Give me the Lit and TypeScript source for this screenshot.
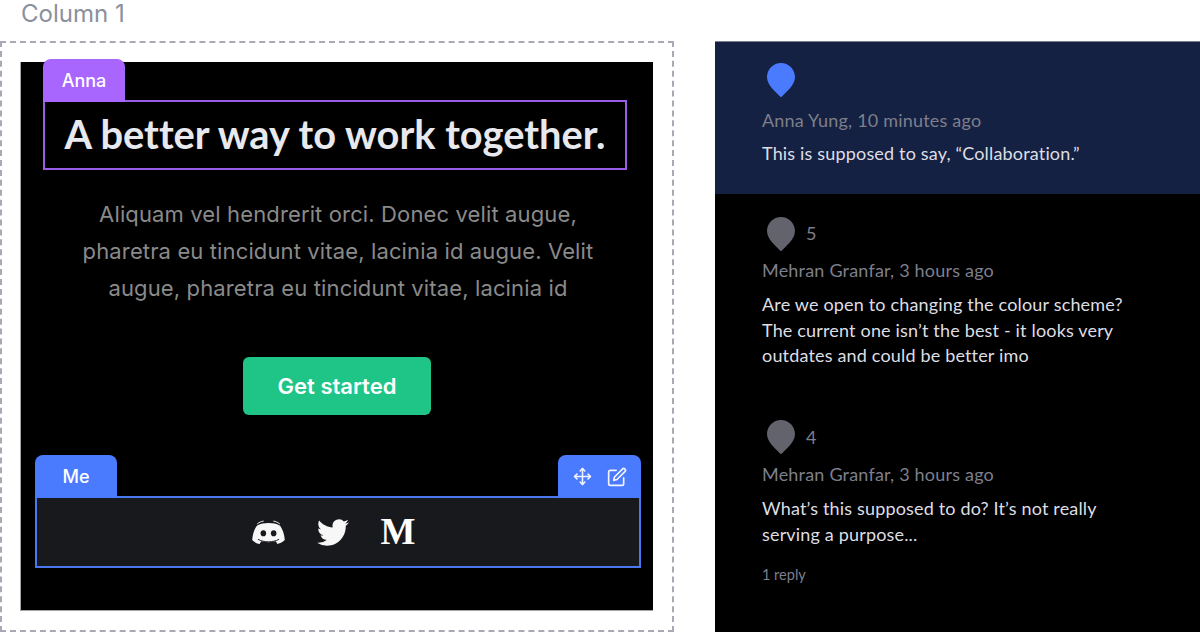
import { LitElement, html, css, svg } from "lit";
import { customElement } from "lit/decorators.js";

const pin = (color: string) => html`<svg class="pin" width="28" height="34" viewBox="0 0 28 34"><path fill=${color} d="M14 0C6.3 0 0 6.3 0 14c0 8 8.500 14.600 13 19.500a1.400 1.400 0 0 0 2 0C19.500 28.600 28 22 28 14 28 6.300 21.700 0 14 0z"/></svg>`;

const discord = svg`
  <path fill="#f7f7f7" d="M10 4.200C7.800 4.700 6 5.500 4.700 6.500 2.300 10 .6 14.500.2 20.300c1.700 1.900 4.300 3.300 7.200 3.800l1.500-2.500c3.600 1 10.600 1 14.200 0l1.500 2.500c2.900-.5 5.500-1.900 7.200-3.800-.4-5.800-2.100-10.300-4.500-13.800C26 5.500 24.200 4.700 22 4.200c-3.900-.7-8.100-.7-12 0z"/>
  <path fill="none" stroke="#f7f7f7" stroke-width="0.900" d="M5 4.800C7 3 9 2.300 11.300 1.900M27 4.800C25 3 23 2.300 20.700 1.900"/>
  <path fill="none" stroke="#18191d" stroke-width="0.900" d="M5.700 19.600c6 3.200 14.600 3.200 20.600 0"/>
  <ellipse cx="11" cy="13.700" rx="2.700" ry="3" fill="#18191d"/><ellipse cx="21" cy="13.700" rx="2.700" ry="3" fill="#18191d"/>`;

const twitter = svg`<path fill="#f7f7f7" d="M23.953 4.570a10 10 0 0 1-2.825.775 4.958 4.958 0 0 0 2.163-2.723c-.951.555-2.005.959-3.127 1.184a4.920 4.920 0 0 0-8.384 4.482C7.690 8.095 4.067 6.130 1.640 3.162a4.822 4.822 0 0 0-.666 2.475c0 1.710.870 3.213 2.188 4.096a4.904 4.904 0 0 1-2.228-.616v.060a4.923 4.923 0 0 0 3.946 4.827 4.996 4.996 0 0 1-2.212.085 4.936 4.936 0 0 0 4.604 3.417 9.867 9.867 0 0 1-6.102 2.105c-.390 0-.779-.023-1.170-.067a13.995 13.995 0 0 0 7.557 2.209c9.053 0 13.998-7.496 13.998-13.985 0-.210 0-.420-.015-.630A9.935 9.935 0 0 0 24 4.590z"/>`;

@customElement("app-root")
export class AppRoot extends LitElement {
  static styles = css`
    :host { display: flex; width: 1200px; height: 632px; background: #fff; overflow: hidden; font-family: Inter, sans-serif; }
    .left { width: 674px; flex: none; display: flex; flex-direction: column; }
    .label { height: 41px; padding-left: 21px; box-sizing: border-box; font-size: 24px; line-height: 27px; color: #8b909d; }
    .frame { height: 591px; box-sizing: border-box; border: 2px dashed #a8a9b4; padding: 19px 19px 20px 18px; }
    .canvas { height: 549px; box-sizing: border-box; background: #000; border-left: 1px solid #a5a5a5; border-bottom: 1px solid #a5a5a5; padding-top: 38px; display: flex; flex-direction: column; }
    .head { position: relative; box-sizing: border-box; width: 584px; height: 70px; margin-left: 22px; padding-bottom: 3px; border: 2px solid #9a5de6; display: flex; align-items: center; justify-content: center; }
    .head h1 { margin: 0; font-family: Lato, sans-serif; font-weight: 700; font-size: 39.800px; font-variant-ligatures: none; color: #e8e8ef; white-space: nowrap; }
    .tab { position: absolute; left: -2px; top: -43px; width: 82px; height: 43px; border-radius: 8px 8px 0 0; color: #fff; font-size: 18px; font-weight: 500; display: flex; align-items: center; justify-content: center; }
    .tab.anna { background: #a866ff; }
    .tab.me { background: #4a7bff; }
    .tab.tools { background: #4a7bff; left: auto; right: -2px; width: 83px; gap: 15px; }
    .tab.tools svg { display: block; }
    p.lead { margin: 26px 0 0 37px; width: 560px; text-align: center; font-size: 22px; letter-spacing: .13px; line-height: 37px; color: #8a8a8a; }
    .cta { margin: 50px 0 0 222px; width: 188px; height: 58px; border-radius: 6px; background: #1fc587; color: #fff; font: 600 22px Inter, sans-serif; display: flex; align-items: center; justify-content: center; }
    .foot { position: relative; margin: 81px 0 0 14px; box-sizing: border-box; width: 606px; height: 72px; padding-right: 10px; background: #18191d; border: 2px solid #4a78f0; display: flex; align-items: center; justify-content: center; gap: 32px; }
    .foot svg.logo { display: block; }
    .foot .m { font-family: "Liberation Serif", serif; font-weight: 700; font-size: 37px; line-height: 32px; color: #fff; width: 34px; text-align: center; }
    .right { margin-left: 41px; margin-top: 41px; flex: 1; background: #000; border-top: 1px solid #7d8290; color: #dedee4; font-family: Lato, sans-serif; }
    .c { padding: 0 47px; }
    .c.active { background: #152142; height: 152px; padding-top: 21px; box-sizing: border-box; }
    .c.two { padding-top: 23px; height: 204px; box-sizing: border-box; }
    .c.three { padding-top: 22px; }
    .top { display: flex; align-items: center; gap: 11px; height: 34px; color: #7d7f8c; font-size: 18px; }
    .two .n { margin-top: -3px; }
    .three .n { margin-top: -1px; }
    .pin { display: block; margin-left: 5px; }
    .meta { font-size: 18px; letter-spacing: .2px; line-height: 24px; color: #7d7f8c; margin-top: 7px; }
    .active .meta { margin-top: 11px; }
    .three .meta { margin-top: 8px; }
    .body { font-size: 18px; letter-spacing: .17px; line-height: 25.500px; margin-top: 10px; width: 400px; }
    .active .body { margin-top: 9px; }
    .reply { font-size: 14.500px; line-height: 20px; color: #7d7f8c; margin-top: 18px; }
  `;

  render() {
    return html`
      <section class="left">
        <div class="label">Column 1</div>
        <div class="frame">
          <div class="canvas">
            <div class="head">
              <span class="tab anna">Anna</span>
              <h1>A better way to work together.</h1>
            </div>
            <p class="lead">Aliquam vel hendrerit orci. Donec velit augue, pharetra eu tincidunt vitae, lacinia id augue. Velit augue, pharetra eu tincidunt vitae, lacinia id</p>
            <div class="cta">Get started</div>
            <div class="foot">
              <span class="tab me">Me</span>
              <span class="tab tools">
                <svg width="19" height="19" viewBox="0 0 24 24" fill="none" stroke="#f2f5ff" stroke-width="2" stroke-linecap="round" stroke-linejoin="round"><polyline points="5 9 2 12 5 15"/><polyline points="9 5 12 2 15 5"/><polyline points="15 19 12 22 9 19"/><polyline points="19 9 22 12 19 15"/><line x1="2" y1="12" x2="22" y2="12"/><line x1="12" y1="2" x2="12" y2="22"/></svg>
                <svg width="20" height="20" viewBox="0 0 24 24" fill="none" stroke="#f2f5ff" stroke-width="2" stroke-linecap="round" stroke-linejoin="round"><path d="M11 4H4a2 2 0 0 0-2 2v14a2 2 0 0 0 2 2h14a2 2 0 0 0 2-2v-7"/><path d="M18.500 2.500a2.121 2.121 0 0 1 3 3L12 15l-4 1 1-4 9.500-9.500z"/></svg>
              </span>
              <svg class="logo" width="33" height="27" viewBox="0 0 32 26">${discord}</svg>
              <svg class="logo" width="32" height="27" viewBox="0 2 24 20" preserveAspectRatio="none">${twitter}</svg>
              <span class="m">M</span>
            </div>
          </div>
        </div>
      </section>
      <aside class="right">
        <div class="c active">
          <div class="top">${pin("#4a7bff")}</div>
          <div class="meta">Anna Yung, 10 minutes ago</div>
          <div class="body">This is supposed to say, “Collaboration.”</div>
        </div>
        <div class="c two">
          <div class="top">${pin("#62636d")}<span class="n">5</span></div>
          <div class="meta">Mehran Granfar, 3 hours ago</div>
          <div class="body">Are we open to changing the colour scheme?<br />The current one isn’t the best - it looks very<br />outdates and could be better imo</div>
        </div>
        <div class="c three">
          <div class="top">${pin("#62636d")}<span class="n">4</span></div>
          <div class="meta">Mehran Granfar, 3 hours ago</div>
          <div class="body">What’s this supposed to do? It’s not really<br />serving a purpose...</div>
          <div class="reply">1 reply</div>
        </div>
      </aside>
    `;
  }
}
